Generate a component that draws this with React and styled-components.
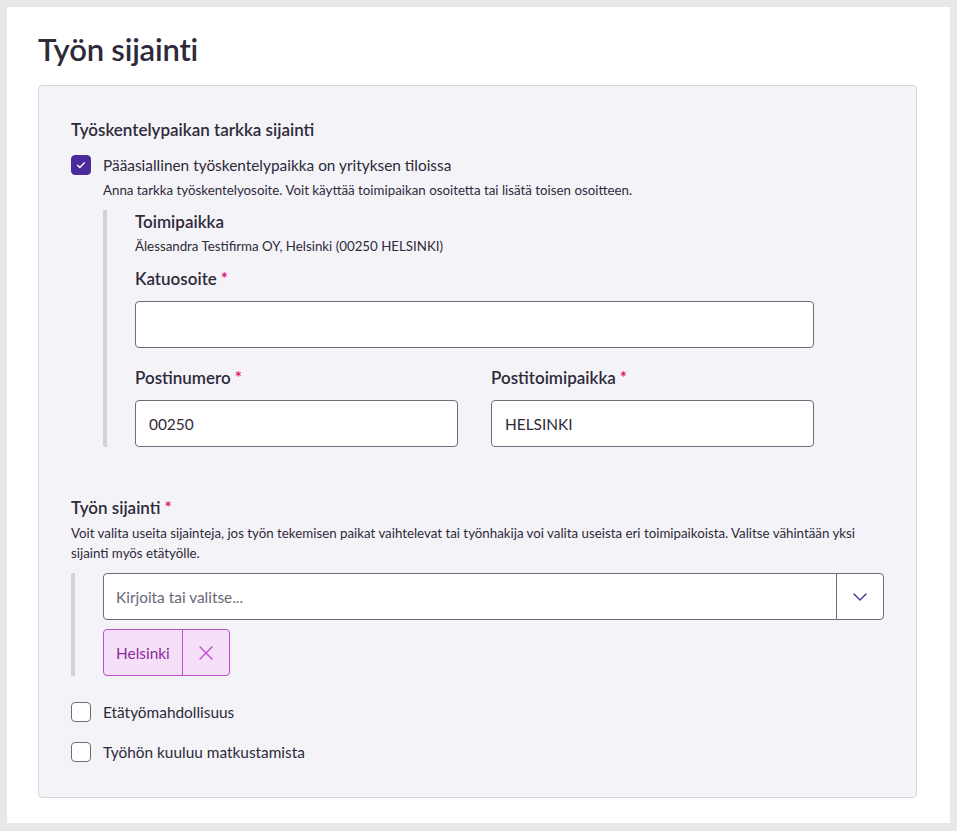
import React, {useState} from 'react';
import styled, {createGlobalStyle} from 'styled-components';

const colors = {
  page: '#e8e8e8',
  card: '#ffffff',
  panel: '#f4f3f8',
  panelBorder: '#d7d5dc',
  text: '#2e2a3a',
  border: '#6f6c7a',
  bar: '#d3d1d8',
  purple: '#4b2a99',
  required: '#e0147a',
  tagBg: '#f6dff8',
  tagBorder: '#bd4fcf',
  tagText: '#8a2c9d',
};

const GlobalStyle = createGlobalStyle`
  body {
    margin: 0;
    padding: 7px;
    background: ${colors.page};
    font-family: Lato, "Open Sans", sans-serif;
    color: ${colors.text};
  }
  * { box-sizing: border-box; }
`;

const Card = styled.div`
  background: ${colors.card};
  height: 816px;
  padding: 22px 33px 0 31px;
`;

const Title = styled.h1`
  margin: 0;
  font-size: 31px;
  line-height: 40px;
  font-weight: 600;
  letter-spacing: -0.2px;
`;

const Panel = styled.section`
  margin-top: 16px;
  background: ${colors.panel};
  border: 1px solid ${colors.panelBorder};
  border-radius: 4px;
  padding: 32px 32px 35px 32px;
`;

const Heading = styled.div`
  font-size: 17px;
  line-height: 24px;
  font-weight: 600;
  margin-top: ${(p) => p.$mt || 0}px;
`;

const Star = styled.span`
  color: ${colors.required};
  margin-left: 4px;
`;

const CheckRow = styled.label`
  display: flex;
  align-items: center;
  gap: 12px;
  font-size: 15.4px;
  line-height: 20px;
  margin-top: ${(p) => p.$mt || 0}px;
  cursor: pointer;
`;

const Box = styled.span`
  width: 20px;
  height: 20px;
  flex: none;
  border-radius: 4px;
  display: flex;
  align-items: center;
  justify-content: center;
  background: ${(p) => (p.$checked ? colors.purple : '#fff')};
  border: 1px solid ${(p) => (p.$checked ? colors.purple : colors.border)};
`;

const Help = styled.p`
  margin: ${(p) => p.$mt || 0}px 0 0 ${(p) => p.$indent || 0}px;
  font-size: 13.3px;
  line-height: 20px;
`;

const Indented = styled.div`
  margin: ${(p) => p.$mt || 0}px 0 0 ${(p) => p.$indent || 0}px;
  border-left: 4px solid ${colors.bar};
  border-radius: 2px;
  padding-left: ${(p) => p.$pad}px;
`;

const Fields = styled.div`
  max-width: 679px;
`;

const FieldRow = styled.div`
  display: grid;
  grid-template-columns: 1fr 1fr;
  column-gap: 33px;
  margin-top: 18px;
`;

const Label = styled.div`
  font-size: 17px;
  line-height: 24px;
  font-weight: 600;
  margin-top: ${(p) => p.$mt || 0}px;
`;

const Input = styled.input`
  display: block;
  width: 100%;
  height: 47px;
  margin-top: 10px;
  border: 1px solid ${colors.border};
  border-radius: 4px;
  background: #fff;
  padding: 0 13px;
  font: 15.4px Lato, sans-serif;
  color: ${colors.text};
  outline: none;
`;

const Combo = styled.div`
  display: flex;
  height: 47px;
  border: 1px solid ${colors.border};
  border-radius: 4px;
  background: #fff;
`;

const ComboInput = styled.input`
  flex: 1;
  border: none;
  background: transparent;
  padding: 0 12px;
  font: 15.4px Lato, sans-serif;
  color: ${colors.text};
  outline: none;
  &::placeholder {
    color: #6b6776;
  }
`;

const ComboButton = styled.button`
  width: 47px;
  border: none;
  border-left: 1px solid ${colors.border};
  background: transparent;
  display: flex;
  align-items: center;
  justify-content: center;
  padding: 0;
  cursor: pointer;
`;

const Tag = styled.div`
  display: inline-flex;
  margin-top: 9px;
  height: 47px;
  border: 1px solid ${colors.tagBorder};
  border-radius: 4px;
  background: ${colors.tagBg};
  color: ${colors.tagText};
  font-size: 15.4px;
`;

const TagText = styled.span`
  display: flex;
  align-items: center;
  padding: 0 12px;
  border-right: 1px solid ${colors.tagBorder};
`;

const TagRemove = styled.button`
  width: 46px;
  border: none;
  background: transparent;
  display: flex;
  align-items: center;
  justify-content: center;
  padding: 0;
  cursor: pointer;
`;

const Check = () => (
  <svg width="12" height="12" viewBox="0 0 12 12" fill="none">
    <path d="M2.5 6.2l2.3 2.3 4.7-4.8" stroke="#fff" strokeWidth="1.3" strokeLinecap="round" strokeLinejoin="round" />
  </svg>
);

const Checkbox = ({checked, onChange, children, mt}) => (
  <CheckRow $mt={mt} onClick={onChange}>
    <Box $checked={checked}>{checked && <Check />}</Box>
    {children}
  </CheckRow>
);

const App = () => {
  const [mainPlace, setMainPlace] = useState(true);
  const [remote, setRemote] = useState(false);
  const [travel, setTravel] = useState(false);

  return (
    <>
      <GlobalStyle />
      <Card>
        <Title>Työn sijainti</Title>
        <Panel>
          <Heading>Työskentelypaikan tarkka sijainti</Heading>
          <Checkbox mt={13} checked={mainPlace} onChange={() => setMainPlace(!mainPlace)}>
            Pääasiallinen työskentelypaikka on yrityksen tiloissa
          </Checkbox>
          <Help $mt={5} $indent={32}>
            Anna tarkka työskentelyosoite. Voit käyttää toimipaikan osoitetta tai lisätä toisen osoitteen.
          </Help>
          <Indented $mt={10} $indent={32} $pad={28}>
            <Label>Toimipaikka</Label>
            <Help $mt={2}>Älessandra Testifirma OY, Helsinki (00250 HELSINKI)</Help>
            <Fields>
              <Label $mt={11}>
                Katuosoite<Star>*</Star>
              </Label>
              <Input defaultValue="" />
              <FieldRow>
                <div>
                  <Label>
                    Postinumero<Star>*</Star>
                  </Label>
                  <Input defaultValue="00250" />
                </div>
                <div>
                  <Label>
                    Postitoimipaikka<Star>*</Star>
                  </Label>
                  <Input defaultValue="HELSINKI" />
                </div>
              </FieldRow>
            </Fields>
          </Indented>

          <Heading $mt={49}>
            Työn sijainti<Star>*</Star>
          </Heading>
          <Help $mt={3}>
            Voit valita useita sijainteja, jos työn tekemisen paikat vaihtelevat tai työnhakija voi valita useista eri toimipaikoista. Valitse vähintään yksi sijainti myös etätyölle.
          </Help>
          <Indented $mt={10} $pad={28}>
            <Combo>
              <ComboInput placeholder="Kirjoita tai valitse..." />
              <ComboButton aria-label="Avaa">
                <svg width="14" height="8" viewBox="0 0 14 8" fill="none">
                  <path d="M1 1l6 6 6-6" stroke={colors.purple} strokeWidth="1.4" strokeLinecap="round" strokeLinejoin="round" />
                </svg>
              </ComboButton>
            </Combo>
            <Tag>
              <TagText>Helsinki</TagText>
              <TagRemove aria-label="Poista">
                <svg width="14" height="14" viewBox="0 0 14 14" fill="none">
                  <path d="M1 1l12 12M13 1L1 13" stroke={colors.tagBorder} strokeWidth="1.4" strokeLinecap="round" />
                </svg>
              </TagRemove>
            </Tag>
          </Indented>

          <Checkbox mt={26} checked={remote} onChange={() => setRemote(!remote)}>
            Etätyömahdollisuus
          </Checkbox>
          <Checkbox mt={20} checked={travel} onChange={() => setTravel(!travel)}>
            Työhön kuuluu matkustamista
          </Checkbox>
        </Panel>
      </Card>
    </>
  );
};

export default App;
